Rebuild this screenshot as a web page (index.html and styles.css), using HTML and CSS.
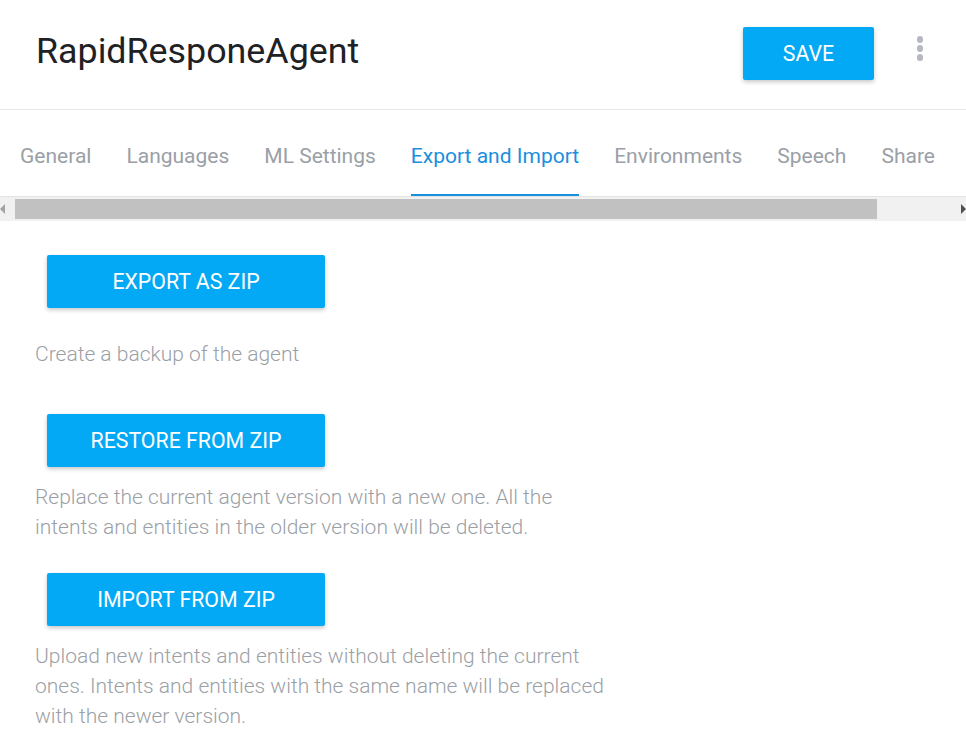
FILE: index.html
```html
<!DOCTYPE html>
<html>
<head>
<meta charset="utf-8">
<link rel="stylesheet" href="styles.css">
</head>
<body>
<header class="topbar">
  <h1 class="title">RapidResponeAgent</h1>
  <div class="actions">
    <button class="btn btn-save">SAVE</button>
    <div class="more"><span></span><span></span><span></span></div>
  </div>
</header>
<nav class="tabs">
  <div class="tab">General</div>
  <div class="tab">Languages</div>
  <div class="tab">ML Settings</div>
  <div class="tab active">Export and Import</div>
  <div class="tab">Environments</div>
  <div class="tab">Speech</div>
  <div class="tab">Share</div>
</nav>
<div class="scrollbar">
  <div class="arrow arrow-left"></div>
  <div class="track"><div class="thumb"></div></div>
  <div class="arrow arrow-right"></div>
</div>
<main class="content">
  <section class="block block-1">
    <button class="btn btn-action">EXPORT AS ZIP</button>
    <p class="desc">Create a backup of the agent</p>
  </section>
  <section class="block block-2">
    <button class="btn btn-action">RESTORE FROM ZIP</button>
    <p class="desc">Replace the current agent version with a new one. All the intents and entities in the older version will be deleted.</p>
  </section>
  <section class="block block-3">
    <button class="btn btn-action">IMPORT FROM ZIP</button>
    <p class="desc">Upload new intents and entities without deleting the current ones. Intents and entities with the same name will be replaced with the newer version.</p>
  </section>
</main>
</body>
</html>
```

FILE: styles.css
```css
* { box-sizing: border-box; }
html, body {
  margin: 0;
  padding: 0;
  background: #fff;
  font-family: Roboto, "Liberation Sans", sans-serif;
  width: 966px;
  overflow: hidden;
}
.topbar {
  height: 110px;
  border-bottom: 1px solid #e6e6e6;
  display: flex;
  align-items: center;
  justify-content: space-between;
  padding: 0 0 0 36px;
}
.title {
  margin: 0;
  font-size: 35.8px;
  font-weight: 400;
  color: #202124;
  position: relative;
  top: -4px;
}
.actions {
  display: flex;
  align-items: center;
  position: relative;
  top: -1px;
}
.btn {
  border: none;
  background: #03a9f4;
  color: #fff;
  font-family: Roboto, "Liberation Sans", sans-serif;
  font-size: 21.3px;
  font-weight: 400;
  border-radius: 2px;
  box-shadow: 0 2px 4px rgba(0,0,0,0.22);
  cursor: pointer;
  padding: 0;
}
.btn-save {
  width: 131px;
  height: 53px;
}
.more {
  width: 92px;
  display: flex;
  flex-direction: column;
  align-items: center;
  gap: 2.5px;
  position: relative;
  top: -5px;
}
.more span {
  width: 6.5px;
  height: 6.5px;
  border-radius: 50%;
  background: #b5b8bf;
}
.tabs {
  display: flex;
  gap: 35px;
  padding-left: 20px;
  height: 86px;
  white-space: nowrap;
}
.tab {
  font-size: 21px;
  color: #9aa0a6;
  padding-top: 34px;
  height: 86px;
  border-bottom: 2px solid transparent;
}
.tab.active {
  color: #1a8fdd;
  border-bottom-color: #1a8fdd;
}
.scrollbar {
  height: 25px;
  display: flex;
  align-items: center;
  background: #f1f1f1;
  border-top: 1px solid #e4e4e4;
}
.track {
  flex: 1;
  height: 100%;
  padding: 2px 0 2px 10px;
}
.thumb {
  width: 862px;
  height: 100%;
  background: #c1c1c1;
}
.arrow {
  width: 0;
  height: 0;
  border-top: 5px solid transparent;
  border-bottom: 5px solid transparent;
}
.arrow-left {
  border-right: 5px solid #a3a3a3;
}
.arrow-right {
  border-left: 5px solid #505050;
  margin-left: 79px;
}
.content {
  padding-left: 35px;
}
.block {
  display: flex;
  flex-direction: column;
  align-items: flex-start;
}
.btn-action {
  width: 278px;
  height: 53px;
  margin-left: 12px;
}
.desc {
  margin: 0;
  font-size: 21px;
  font-weight: 300;
  color: #9b9fa6;
  line-height: 30px;
  width: 572px;
}
.block-1 { margin-top: 34px; }
.block-1 .desc { margin-top: 31px; }
.block-2 { margin-top: 45px; }
.block-2 .desc { margin-top: 15px; }
.block-3 { margin-top: 31px; }
.block-3 .desc { margin-top: 15px; }
```
